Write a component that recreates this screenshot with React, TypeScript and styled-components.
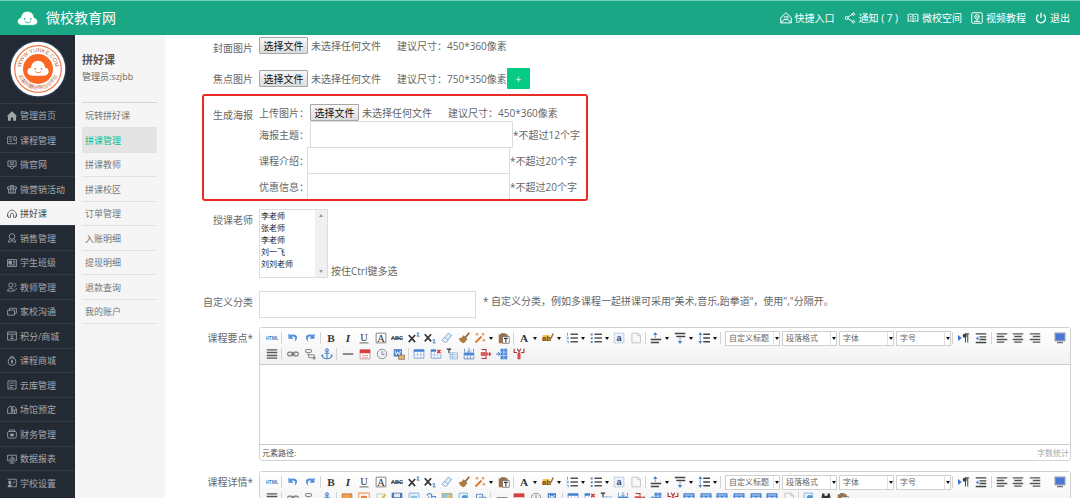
import React, { useRef } from "react";
import styled, { createGlobalStyle, css } from "styled-components";

const GlobalStyle = createGlobalStyle`
  * { box-sizing: border-box; }
  body { margin: 0; }
  body, button, input, select, textarea {
    font-family: "Open Sans", "Noto Sans CJK SC", sans-serif;
    font-size: 10px;
  }
`;

/* ---------- page frame ---------- */

const Page = styled.div`
  display: flex;
  flex-direction: column;
  height: 100vh;
  overflow: hidden;
  color: #666;
  background: #fff;
`;

const Header = styled.header`
  flex: none;
  display: flex;
  align-items: center;
  height: 35px;
  padding: 0 10px 0 17px;
  color: #fff;
  background: #1aa786;
  border-top: 1px solid #6fd0b8;
`;

const Brand = styled.h1`
  flex: 1;
  display: flex;
  align-items: center;
  gap: 8px;
  margin: 0;
  font-size: 14px;
  font-weight: 400;
  line-height: 20px;
`;

const HeaderNav = styled.nav`
  display: flex;
  gap: 9px;
`;

const HeaderLink = styled.a`
  display: flex;
  align-items: center;
  gap: 3px;
  color: #fff;
  line-height: 16px;
  text-decoration: none;
  white-space: nowrap;
`;

const Columns = styled.div`
  flex: 1;
  display: flex;
  min-height: 0;
`;

const Sidebar = styled.aside`
  flex: none;
  width: 75px;
  background: #242a33;
  overflow: hidden;
`;

const AvatarBox = styled.div`
  display: flex;
  justify-content: center;
  align-items: center;
  height: 68px;
`;

const rowRhythm = css`
  height: 24px;
  &:nth-child(even) { height: 25px; }
`;

const MenuList = styled.ul`
  margin: 0;
  padding: 0;
  list-style: none;
`;

const MenuItem = styled.li<{ $active?: boolean }>`
  ${rowRhythm}
  border-top: 1px solid ${p => (p.$active ? "#f5f5f5" : "#343a43")};
  background: ${p => (p.$active ? "#f5f5f5" : "transparent")};
  a {
    display: flex;
    align-items: center;
    gap: 3px;
    height: 100%;
    padding-left: 7px;
    color: ${p => (p.$active ? "#444" : "#a4a7ab")};
    font-size: 9px;
    text-decoration: none;
    white-space: nowrap;
  }
`;

const SubPanel = styled.aside`
  flex: none;
  width: 90px;
  padding: 16px 8px 0 7px;
  background: #f5f5f5;
  overflow: hidden;
`;

const SubTitle = styled.h2`
  margin: 0;
  color: #555;
  font-size: 11px;
  font-weight: 700;
  line-height: 18px;
`;

const SubUser = styled.p`
  margin: 0 0 17px;
  font-size: 9px;
  line-height: 16px;
`;

const SubList = styled(MenuList)`
  padding-top: 1px;
  border-top: 1px solid #d4d4d4;
`;

const SubItem = styled.li<{ $active?: boolean }>`
  ${rowRhythm}
  border-bottom: 1px solid #e2e2e2;
  background: ${p => (p.$active ? "#e4e4e4" : "transparent")};
  a {
    display: flex;
    align-items: center;
    height: 100%;
    padding-left: 3px;
    color: ${p => (p.$active ? "#12bd82" : "#777")};
    font-size: 9px;
    text-decoration: none;
  }
`;

const Main = styled.main`
  flex: 1;
  min-width: 0;
  padding: 2px 9px 0 0;
  overflow: hidden;
`;

/* ---------- form ---------- */

const FormRow = styled.div<{ $gap: number }>`
  position: relative;
  display: grid;
  grid-template-columns: 88px minmax(0, 1fr);
  column-gap: 6px;
  align-items: start;
  margin-bottom: ${p => p.$gap}px;
`;

const RowLabel = styled.label`
  line-height: 22px;
  text-align: right;
  white-space: nowrap;
`;

const Line = styled.div<{ $height: number }>`
  display: flex;
  align-items: center;
  height: ${p => p.$height}px;
  white-space: nowrap;
`;

const FileButton = styled.button`
  width: 49px;
  height: 17px;
  padding: 0;
  color: #111;
  line-height: 14px;
  background: linear-gradient(#f8f8f8, #dcdcdc);
  border: 1px solid #a6a6a6;
  border-radius: 1px;
`;

const FileName = styled.span`
  width: 89px;
  padding-left: 3px;
`;

const AddButton = styled.button`
  width: 23px;
  height: 21px;
  padding: 0;
  color: #fff;
  line-height: 18px;
  background: #05cb84;
  border: 0;
  border-radius: 1px;
`;

const Highlight = styled.div`
  position: absolute;
  inset: -10px auto -2px 37px;
  width: 386px;
  border: 2px solid #ea2a24;
  border-radius: 3px;
  pointer-events: none;
`;

const FieldName = styled.label<{ $wide?: boolean }>`
  flex: none;
  width: ${p => (p.$wide ? 51 : 48)}px;
`;

const TextInput = styled.input<{ $width: number }>`
  width: ${p => p.$width}px;
  height: 27px;
  margin-bottom: -1px;
  padding: 0 4px;
  background: #fff;
  border: 1px solid #dcdcdc;
  outline: none;
`;

const TeacherLine = styled.div`
  display: flex;
  align-items: flex-end;
  gap: 3px;
  line-height: 14px;
`;

const ListFrame = styled.div`
  position: relative;
  width: 69px;
  height: 69px;
  border: 1px solid #ddd;
`;

const TeacherList = styled.select`
  display: block;
  width: 100%;
  height: 100%;
  padding: 0;
  color: #222;
  background: #fff;
  border: 0;
  outline: none;
  scrollbar-width: none;
  option {
    min-height: 12px;
    height: 12px;
    padding: 0 1px;
    font-size: 8px;
    line-height: 12px;
  }
`;

const ListScroll = styled.div`
  position: absolute;
  inset: 0 0 0 auto;
  display: flex;
  flex-direction: column;
  justify-content: space-between;
  align-items: center;
  width: 12px;
  padding: 4px 0;
  background: #f0f0f0;
`;

const Hint = styled.span`
  align-self: flex-start;
  padding-left: 7px;
  line-height: 20px;
`;

/* ---------- rich text editor ---------- */

const EditorBox = styled.div`
  border: 1px solid #d2d2d2;
  border-radius: 3px;
`;

const Toolbar = styled.div`
  height: 37px;
  padding: 2px 0 0 1px;
  background: linear-gradient(#fff, #f1f1f1);
  border-bottom: 1px solid #ccc;
`;

const ToolRow = styled.div`
  display: flex;
  height: 16px;
`;

const ToolGroup = styled.div<{ $width: number; $last?: boolean }>`
  flex: none;
  display: flex;
  align-items: center;
  width: ${p => p.$width}px;
  padding: 0 2px;
  background: ${p => (p.$last ? "none" : "linear-gradient(#d4d4d4, #d4d4d4) right center / 1px 12px no-repeat")};
`;

const ToolButton = styled.button<{ $drop?: boolean }>`
  flex: ${p => (p.$drop ? 23 : 16)} 1 0;
  min-width: 0;
  display: flex;
  align-items: center;
  justify-content: center;
  gap: 3px;
  height: 16px;
  padding: 0;
  background: none;
  border: 0;
`;

const Combo = styled.label`
  flex: 1;
  display: flex;
  height: 15px;
  margin-left: 2px;
  background: #fff;
  border: 1px solid #d0d0d0;
  select {
    flex: 1;
    min-width: 0;
    padding: 0 0 0 3px;
    color: #666;
    font-size: 8px;
    line-height: 12px;
    background: none;
    border: 0;
    appearance: none;
    outline: none;
  }
`;

const ComboArrow = styled.span`
  display: flex;
  align-items: center;
  justify-content: center;
  width: 6px;
  border-left: 1px solid #e0e0e0;
`;

const Spring = styled.div`
  flex: 1;
`;

const EditArea = styled.textarea`
  display: block;
  width: 100%;
  height: 79px;
  padding: 6px;
  border: 0;
  outline: none;
  resize: none;
`;

const EditorFoot = styled.div`
  display: flex;
  justify-content: space-between;
  height: 16px;
  padding: 0 1px 0 2px;
  color: #555;
  font-size: 8px;
  line-height: 15px;
  border-top: 1px solid #ccc;
`;

const Counter = styled.span`
  color: #aaa;
`;

/* ---------- drawings ---------- */

const stroke = { fill: "none", stroke: "currentColor", strokeWidth: 1.3 } as const;

function Icon({ size = 12, children }: { size?: number; children: React.ReactNode }) {
  return (
    <svg width={size} height={size} viewBox="0 0 16 16" aria-hidden="true">
      {children}
    </svg>
  );
}

function Caret({ up, color = "#111" }: { up?: boolean; color?: string }) {
  return (
    <svg width="4" height="3" viewBox="0 0 4 3" aria-hidden="true">
      <path d={up ? "M0 3h4L2 0z" : "M0 0h4L2 3z"} fill={color} />
    </svg>
  );
}

const cloudPath =
  "M6 19C2.600 19 .5 17 .5 14.200c0-2.600 1.900-4.400 4.300-4.700C5 5 8.500 1.500 13 1.500s8 3.500 8.200 8c2.400.3 4.300 2.100 4.300 4.700 0 2.800-2.100 4.800-5.500 4.800z";

function CloudLogo() {
  return (
    <svg width="21" height="17" viewBox="0 0 26 21" aria-hidden="true">
      <path d={cloudPath} fill="#fff" stroke="#04bd74" strokeWidth="1" />
      <circle cx="9.500" cy="11" r="1" fill="#1aa786" />
      <circle cx="17" cy="11" r="1" fill="#1aa786" />
      <path d="M9.500 14c2 2.200 5.500 2.200 7.500 0" fill="none" stroke="#1aa786" />
    </svg>
  );
}

function Avatar() {
  return (
    <svg width="60" height="60" viewBox="0 0 60 60" role="img" aria-label="YUNKE">
      <circle cx="30" cy="30" r="28.500" fill="#34506a" opacity=".6" />
      <circle cx="30" cy="30" r="27.300" fill="#fff" />
      <circle cx="30" cy="30" r="23.300" fill="none" stroke="#ee8050" strokeWidth="1.300" />
      <circle cx="30" cy="30" r="15" fill="#fb6622" />
      <path id="ringTop" d="M12.800 33a17.400 17.400 0 1 1 34.400 0" fill="none" />
      <path id="ringBottom" d="M9.600 30a20.400 20.400 0 0 0 40.800 0" fill="none" />
      <text fontSize="5.500" fill="#b9684a" fontFamily="Liberation Sans, sans-serif" textAnchor="middle">
        <textPath href="#ringTop" startOffset="50%">WWW.YUNKE.COM</textPath>
      </text>
      <text fontSize="5" fill="#b9684a" fontFamily="Noto Sans CJK SC, sans-serif" textAnchor="middle">
        <textPath href="#ringBottom" startOffset="50%">云客网最好用O2O平台</textPath>
      </text>
      <g transform="translate(19 20.500) scale(.85)">
        <path d={cloudPath} fill="#fff" />
        <circle cx="9.500" cy="11" r="1" fill="#fb6622" />
        <circle cx="17" cy="11" r="1" fill="#fb6622" />
        <path d="M9.500 14c2 2.200 5.500 2.200 7.500 0" fill="none" stroke="#fb6622" />
      </g>
    </svg>
  );
}

const menuIcons: Record<string, React.ReactNode> = {
  home: <path d="M8 .5 0 8l1.500 1V15.500h4.700v-5h3.600v5h4.700V9L16 8z" fill="currentColor" />,
  course: <g {...stroke}><path d="M9 3H1v11h14v-4M3.500 6.500H8M3.500 10H8M11 8.500V3.500l2-1.500 2 1.500v5z" /></g>,
  site: <g {...stroke}><path d="M1.500 1.500h13V10h-13zM4.500 4.500h7M4.500 7h7M3.500 10 8 14.500l4.500-4.500" /></g>,
  gift: <g {...stroke}><path d="M1 4.500h14V8H1zM2.500 8v6.500h11V8M6 4.500v10M10 4.500v10M5 2.500h6" /></g>,
  pin: <g {...stroke}><path d="M4 13.500H2.500c-3-3-2-10 5.500-12 7.500 2 8.500 9 5.500 12H12M5.500 14V9c0-3 5-3 5 0v5M1 8.500c0 2 0 4 1.500 5M15 8.500c0 2 0 4-1.500 5" /></g>,
  sales: <g {...stroke}><circle cx="8" cy="5.500" r="4.500" /><path d="M5 9 2 14.500h3.500L8 11l2.500 3.500H14L11 9" /></g>,
  student: <g {...stroke}><path d="M.7 2.500h14.600v11H.7zM9.500 5.500h4M9.500 8h4M3 11h10.500" /><path d="M3 5h4v4H3z" fill="currentColor" /></g>,
  teacher: <g {...stroke}><circle cx="6" cy="5" r="3.300" /><path d="M1 14.500c0-6 10-6 10 0zM11 2c4 0 4 5 1 6M12 13.500c3-1 3-2 3-3.500" /></g>,
  chat: <g {...stroke}><path d="M4 5V2h11v8h-3M1 5h11v8H1z" /></g>,
  points: <g {...stroke}><path d="M1 1.500h14v13H1zM1 5h14M5.500 8h5M8 8v4M5.500 12h5" /></g>,
  shop: <g {...stroke}><circle cx="8" cy="9" r="6.200" /><path d="M5 3.500 6 1h4l1 2.500" /><path d="M8 6v6M6.500 9h3" strokeWidth="2" /></g>,
  library: <g {...stroke}><path d="M1.500 1.500h13v13h-13zM4 5l2 1 3-2 3 2M4 9h8M4 12h5" /></g>,
  venue: <g {...stroke}><path d="M1 13.500V6l3-4h3v11.500zM9 2.500h3l3 4v7H9zM9 8h6M12 8v5" /></g>,
  finance: <g {...stroke}><rect x="1" y="4" width="14" height="10.500" rx="2" /><path d="M4 4V1.500h8V4" /><path d="M6 8h4v3H6z" fill="currentColor" /></g>,
  report: <g {...stroke}><path d="M1 2h14v9H1zM4 14.500h8M8 11v3" /><path d="M5 9V7M8 9V4M11 9V6" strokeWidth="2" /></g>,
  school: <g {...stroke}><path d="M1 2h14v12H9" /><path d="M1.500 14c0-4 6-4 6 0zM3 5h3v4H3z" fill="currentColor" /><path d="m9 9 4-4" /></g>,
};

const headerIcons: Record<string, React.ReactNode> = {
  quick: <g {...stroke}><path d="M1 7.500 8 1l7 6.500V14.500H1zM1 14l5-4h4l5 4" /><path d="M5 6.500h6M5.500 9l2 1.500 4-4" /></g>,
  share: <g {...stroke}><path d="M5 7l6-4M5 8.500l6 4" /><circle cx="3.500" cy="8" r="2" /><circle cx="12.500" cy="2.800" r="1.600" /><circle cx="12.500" cy="13" r="1.600" /></g>,
  book: <g {...stroke}><path d="M8 4C6 2.500 3 2.500 1.500 3.500v9c2-1 4.500-1 6.500.5 2-1.500 4.500-1.500 6.500-.5v-9C13 2.500 10 2.500 8 4zM8 4v9M4 6h2M4 9h2M10 6h2M10 9h2" /></g>,
  video: <g {...stroke}><rect x="1" y="1" width="14" height="14" rx="1.500" /><circle cx="8" cy="6.500" r="3" /><path d="M4 12.500h8M6 6.500h4M8 9.500v3" /></g>,
  power: <g {...stroke} strokeWidth={1.700}><path d="M4.500 3.500a6 6 0 1 0 7 0M8 1v7" /></g>,
};

const glyph = { textAnchor: "middle", fontFamily: "Liberation Serif, serif", fill: "#333" } as const;
const lines = (d: string, color = "#555") => <path d={d} stroke={color} strokeWidth="1.800" fill="none" />;
const grid = (
  <>
    <path d="M1.500 2.500h13v11h-13z" fill="#fff" stroke="#5b8fd0" />
    <path d="M1 2h14v3H1z" fill="#3f7ed0" />
    <path d="M1.500 9h13M6 5v8.500M10.500 5v8.500" stroke="#9dbde6" />
  </>
);

const toolIcons: Record<string, React.ReactNode> = {
  html: <text x="8" y="10.500" textAnchor="middle" fontSize="6.500" fontWeight="700" fontFamily="Liberation Sans, sans-serif" fill="#4c82b8">HTML</text>,
  undo: <path d="M2 2v7h7L6.500 6.500c3-2 6 1 3.500 6.500 6-4 4-12-5.500-9z" fill="#4b93dd" />,
  redo: <path d="M14 2v7H7l2.500-2.500c-3-2-6 1-3.500 6.500-6-4-4-12 5.500-9z" fill="#4b93dd" />,
  bold: <text x="8" y="13" {...glyph} fontSize="15" fontWeight="700">B</text>,
  italic: <text x="8" y="13" {...glyph} fontSize="15" fontWeight="700" fontStyle="italic">I</text>,
  underline: <><text x="8" y="12" {...glyph} fontSize="14">U</text><path d="M2 14.500h12" stroke="#333" /></>,
  border: <><path d="M1.500 1.500h13v13h-13z" fill="none" stroke="#666" /><text x="8" y="13" {...glyph} fontSize="14">A</text></>,
  strike: <><text x="8" y="11" textAnchor="middle" fontSize="7.500" fontWeight="700" fontFamily="Liberation Sans, sans-serif" fill="#333">ABC</text><path d="M0 8.500h16" stroke="#333" /></>,
  sup: <><path d="m1 4 8.500 9.500M9.500 4 1 13.500" stroke="#333" strokeWidth="2.200" /><path d="M11.500 1.500h3L12 5.500h3.500" stroke="#3b78c9" strokeWidth="1.300" fill="none" /></>,
  sub: <><path d="m1 3 8.500 9.500M9.500 3 1 12.500" stroke="#333" strokeWidth="2.200" /><path d="M11.500 10.500h3L12 14.500h3.500" stroke="#3b78c9" strokeWidth="1.300" fill="none" /></>,
  eraser: <><path d="m1.500 11 8-9.500 5 3-8 9.500z" fill="#dce9fa" stroke="#6f9cd6" /><path d="m1.500 11 3-3.500 5 3-3 3.500z" fill="#fff" stroke="#6f9cd6" /></>,
  brush: <><path d="m15 1-5 6" stroke="#9a6a30" strokeWidth="2.500" /><path d="M1 8c3 1 5-2 6-3l5 5c-2 2-2 4-5 5-3-1-5-3-6-7z" fill="#b5793a" /><path d="m7 5 5 5" stroke="#777" strokeWidth="1.500" /></>,
  wand: <><path d="m2 14 8-8" stroke="#e0782c" strokeWidth="2.500" /><path d="M4 1v4M2 3h4M12 1v4M10 3h4M13 9v4M11 11h4" stroke="#f08c3c" strokeWidth="1.300" /></>,
  paste: <><path d="M1 3h12v12H1z" fill="#a86f38" /><path d="M4 1.500h6v3H4z" fill="#777" /><path d="M6 6h9v9H6z" fill="#fff" stroke="#666" /><path d="M8 8.500h5M10.500 8.500V14" stroke="#333" strokeWidth="1.400" /></>,
  color: <text x="8" y="13" {...glyph} fontSize="15" fontWeight="700">A</text>,
  back: <><path d="M1 4h9v8H1z" fill="#f1c64d" /><text x="6" y="11.500" textAnchor="middle" fontSize="10" fontWeight="700" fontFamily="Liberation Sans, sans-serif" fill="#543">ab</text><path d="m15 2-5 10" stroke="#9a6a30" strokeWidth="2" /></>,
  ol: <>{lines("M6 3h10M6 8h10M6 13h10")}<path d="M2 1v4M1 7h2v2H1M1 12h2v3" stroke="#4f85cc" fill="none" /></>,
  ul: <>{lines("M6 3h10M6 8h10M6 13h10")}<path d="M1 2h2.500v2.500H1zM1 7h2.500v2.500H1zM1 12h2.500v2.500H1z" fill="#4f85cc" /></>,
  anchorText: <><path d="M1.500 1.500h13v13h-13z" fill="#e9f1fc" stroke="#8fb0dc" strokeDasharray="2 1" /><text x="8" y="12" textAnchor="middle" fontSize="12" fontWeight="700" fontFamily="Liberation Sans, sans-serif" fill="#345">a</text></>,
  page: <path d="M2.500 1.500h8l3.500 3.500v9.500H2.500zM10.500 1.500V5H14" fill="#f7f7f7" stroke="#b5b5b5" />,
  before: <>{lines("M1 10h14M1 14h11", "#444")}<path d="M7 8V3" stroke="#4f85cc" /><path d="M4 4h6L7 0z" fill="#4f85cc" /></>,
  after: <>{lines("M1 2h14M3 6h12", "#444")}<path d="M8 8v4" stroke="#4f85cc" /><path d="M5 12h6l-3 4z" fill="#4f85cc" /></>,
  leading: <>{lines("M7 3h9M7 8h9M7 13h9", "#444")}<path d="M3 3v10" stroke="#4f85cc" /><path d="M.5 4h5L3 0zM.5 12h5L3 16z" fill="#4f85cc" /></>,
  ltr: <><path d="m0 4 5 4-5 4z" fill="#3f6fd8" /><path d="M10 2v12M13 2v12M15 2.500H9" stroke="#444" strokeWidth="1.300" fill="none" /><circle cx="9" cy="5" r="2.800" fill="#444" /></>,
  indent: <>{lines("M1 2.500h14M6 6.500h9M6 10h9M1 14h14", "#444")}<path d="M4.500 6v5L1 8.500z" fill="#3f6fd8" /></>,
  left: lines("M1 2.500h14M1 6h10M1 10h14M1 13.500h10"),
  center: lines("M1 2.500h14M3 6h10M1 10h14M3 13.500h10"),
  right: lines("M1 2.500h14M5 6h10M1 10h14M5 13.500h10"),
  justify: lines("M1 2.500h14M1 6h14M1 10h14M1 13.500h14"),
  screen: <><path d="M1.500 1.500h13v10h-13z" fill="#4a78d8" stroke="#8795b5" strokeWidth="1.500" /><path d="M4 14h8" stroke="#777" strokeWidth="2" /></>,
  link: <g fill="none" stroke="#777" strokeWidth="1.500"><rect x="1" y="5.500" width="6.500" height="5" rx="2" /><rect x="8.500" y="5.500" width="6.500" height="5" rx="2" /><path d="M5 8h6" /></g>,
  unlink: <g fill="none" stroke="#888" strokeWidth="1.500"><rect x="2" y="2" width="8" height="4" rx="2" /><rect x="6" y="9" width="8" height="4" rx="2" /><path d="m4 8 4 1M12 15l3-3M12 12l3 3" /></g>,
  anchor: <g fill="none" stroke="#4789cf" strokeWidth="1.500"><circle cx="8" cy="3" r="1.800" /><path d="M8 5v9.500M4.500 7h7M1 9c1 7 13 7 14 0M1 9l2 2M15 9l-2 2" /></g>,
  rule: <path d="M1 8h14" stroke="#444" strokeWidth="1.600" />,
  date: <><path d="M1.500 2.500h13v12h-13z" fill="#fff" stroke="#b88" /><path d="M1 2h14v5H1z" fill="#da3e3e" /><path d="M4 10h8M4 12.500h8" stroke="#d88" /></>,
  time: <><circle cx="8" cy="8" r="6.300" fill="#eef1f4" stroke="#8a8f96" strokeWidth="1.300" /><path d="M8 4v4.500h3.500" fill="none" stroke="#567" /></>,
  word: <><path d="M1 1.500h11v10H1z" fill="#4c86d2" /><path d="m3 4 1.500 5L6.500 5l2 4L10 4" stroke="#fff" fill="none" strokeWidth="1.200" /><path d="M7.500 9.500h8v5.500h-8z" fill="#e9b272" stroke="#7a6a55" /></>,
  table: grid,
  tableDel: <>{grid}<path d="M8 1h7.500v7.500H8z" fill="#fff" /><path d="m9.500 2.500 4.500 4.500M14 2.500 9.500 7" stroke="#d83a3a" strokeWidth="2" /></>,
  title: <><path d="M1 1.500h6M4 1.500V7" stroke="#333" strokeWidth="1.500" /><path d="M5.500 6.500h10v8h-10zM5.500 9h10M5.500 12h10M9 6v8" fill="#fff" stroke="#7fa8dc" /></>,
  rowIn: <><path d="M1 6h14v4H1z" fill="#4b88d8" /><path d="M1.500 11v3.500h13V11M6 11v3M10 11v3M8 0v5M5.500 3.500 8 6l2.500-2.500M2 1v4M14 1v4" fill="none" stroke="#4577b8" /></>,
  rowOut: <><path d="M1 5.500h9v5H1z" fill="#e05656" /><path d="M2 2h6v3M2 14h6v-3M9 8h6M13 5.500v5" fill="none" stroke="#a33" strokeWidth="1.500" /></>,
  colIn: <><path d="M6 1h9v14H6z" fill="#4b88d8" /><path d="M6 5.500h9M6 10h9M10.500 1v14" stroke="#c5dbf5" /><path d="M0 8h5M3 5.500 5 8 3 10.500" fill="none" stroke="#4577b8" strokeWidth="1.300" /></>,
  colOut: <><path d="M6 7h4v8H6z" fill="#d64a4a" /><path d="M1.500 1v5h4M14.500 1v5h-4M5.500 1 8 5l2.500-4M8 5v3" fill="none" stroke="#a33" strokeWidth="1.500" /></>,
  image: <><path d="M1.500 2.500h13v11h-13z" fill="#f5a04c" stroke="#a46b35" /><path d="m2 13 4-5 3 3 3-4 2 6z" fill="#5a9a50" /></>,
  face: <><path d="M1 1.500h14v13H1z" fill="#fff" stroke="#f0995c" strokeWidth="1.500" /><path d="M4 5h8v7H4z" fill="#e98345" /></>,
  draw: <><path d="M2.500 2.500h10v12h-10z" fill="#f4f7ea" stroke="#b9c6a0" /><path d="m14 3-6 8" stroke="#d7b944" strokeWidth="2.500" /></>,
  save: <><path d="M1.500 1.500h13v13h-13z" fill="#4f77b8" stroke="#44639a" /><path d="M4 2h8v5H4z" fill="#dfe8f4" /></>,
  map: <><path d="M1.500 1.500h13v13h-13z" fill="#e8f2fd" stroke="#5f9cdc" /><path d="M4 5h8v6H4z" fill="#8dbbea" /></>,
  clip: <path d="M3 5c0-4 6-4 6 0v6c0 3-4 3-4 0V6M8 6h6v8H8" fill="none" stroke="#5a88d8" strokeWidth="1.500" />,
  photo: <><path d="M1.500 2h13v12h-13z" fill="#8ec3ea" stroke="#c49a4a" /><circle cx="10" cy="6" r="2.500" fill="#f1c64d" /></>,
  globe: <><path d="M1.500 1.500h11v13h-11z" fill="#eef5fc" stroke="#6a9ed8" /><circle cx="9" cy="8" r="4" fill="#4c9bd0" /></>,
  code: <path d="M2 3h8v4H5M7 7h7v6H8M2 3v5" fill="none" stroke="#6f8fd0" strokeWidth="1.600" />,
  cells: <><path d="M1.500 2.500h13v11h-13z" fill="#cfe2fa" stroke="#3f7ed0" strokeWidth="1.600" /><path d="M1 5.500h14M8 5v9" stroke="#3f7ed0" strokeWidth="1.500" /></>,
  find: <path d="M3 2h3v3h4V2h3l2 12H9.500V9h-3v5H1z" fill="#333" />,
};

/* ---------- data ---------- */

const headerLinks = [
  ["quick", "快捷入口"],
  ["share", "通知 ( 7 )"],
  ["book", "微校空间"],
  ["video", "视频教程"],
  ["power", "退出"],
];

const menu = [
  ["home", "管理首页"], ["course", "课程管理"], ["site", "微官网"], ["gift", "微营销活动"],
  ["pin", "拼好课"], ["sales", "销售管理"], ["student", "学生班级"], ["teacher", "教师管理"],
  ["chat", "家校沟通"], ["points", "积分/商城"], ["shop", "课程商城"], ["library", "云库管理"],
  ["venue", "场馆预定"], ["finance", "财务管理"], ["report", "数据报表"], ["school", "学校设置"],
];

const subMenu = [
  "玩转拼好课", "拼课管理", "拼课教师", "拼课校区", "订单管理", "入账明细", "提现明细", "退款查询", "我的账户",
];

const teachers = ["李老师", "张老师", "李老师", "刘一飞", "刘刘老师"];

type Group = { width: number; tools: string[]; last?: boolean };

const dropTools = new Set(["wand", "color", "back", "ol", "ul", "before", "after", "leading"]);

const mainTools: Group[] = [
  { width: 21, tools: ["html"] },
  { width: 39, tools: ["undo", "redo"] },
  { width: 193, tools: ["bold", "italic", "underline", "border", "strike", "sup", "sub", "eraser", "brush", "wand", "paste"] },
  { width: 132, tools: ["color", "back", "ol", "ul", "anchorText", "page"] },
  { width: 75, tools: ["before", "after", "leading"] },
];

const sideTools: Group[] = [
  { width: 39, tools: ["ltr", "indent"] },
  { width: 53, tools: ["left", "center", "right"], last: true },
];

const shortRow: Group[] = [
  { width: 21, tools: ["justify"] },
  { width: 55, tools: ["link", "unlink", "anchor"] },
  { width: 72, tools: ["rule", "date", "time", "word"] },
  { width: 120, tools: ["table", "tableDel", "title", "rowIn", "rowOut", "colIn", "colOut"], last: true },
];

const longRow: Group[] = [
  { width: 21, tools: ["justify"] },
  { width: 55, tools: ["link", "unlink", "anchor"] },
  { width: 154, tools: ["image", "face", "draw", "save", "map", "clip", "photo", "globe", "code"] },
  { width: 72, tools: ["rule", "date", "time", "word"] },
  { width: 236, tools: ["table", "tableDel", "title", "rowIn", "rowOut", "colIn", "colOut", "cells", "cells", "cells", "cells", "cells", "cells", "page"] },
  { width: 54, tools: ["globe", "find", "paste"], last: true },
];

/* ---------- parts ---------- */

function FilePicker({ id }: { id: string }) {
  const input = useRef<HTMLInputElement>(null);
  return (
    <>
      <input ref={input} id={id} type="file" hidden />
      <FileButton type="button" onClick={() => input.current?.click()}>选择文件</FileButton>
      <FileName>未选择任何文件</FileName>
    </>
  );
}

function Tools({ groups }: { groups: Group[] }) {
  return (
    <>
      {groups.map((g, i) => (
        <ToolGroup key={i} $width={g.width} $last={g.last}>
          {g.tools.map((name, j) => (
            <ToolButton key={j} type="button" aria-label={name} $drop={dropTools.has(name)}>
              <Icon>{toolIcons[name]}</Icon>
              {dropTools.has(name) && <Caret />}
            </ToolButton>
          ))}
        </ToolGroup>
      ))}
    </>
  );
}

function Editor({ id, second, status }: { id: string; second: Group[]; status?: boolean }) {
  return (
    <EditorBox>
      <Toolbar>
        <ToolRow>
          <Tools groups={mainTools} />
          <ToolGroup $width={232}>
            {["自定义标题", "段落格式", "字体", "字号"].map(name => (
              <Combo key={name}>
                <select aria-label={name}><option>{name}</option></select>
                <ComboArrow><Caret /></ComboArrow>
              </Combo>
            ))}
          </ToolGroup>
          <Tools groups={sideTools} />
          <Spring />
          <Tools groups={[{ width: 20, tools: ["screen"], last: true }]} />
        </ToolRow>
        <ToolRow><Tools groups={second} /></ToolRow>
      </Toolbar>
      <EditArea id={id} />
      {status && (
        <EditorFoot>
          <span>元素路径:</span>
          <Counter>字数统计</Counter>
        </EditorFoot>
      )}
    </EditorBox>
  );
}

export default function App() {
  return (
    <Page>
      <GlobalStyle />
      <Header>
        <Brand><CloudLogo />微校教育网</Brand>
        <HeaderNav>
          {headerLinks.map(([icon, text]) => (
            <HeaderLink key={icon} href="#"><Icon>{headerIcons[icon]}</Icon>{text}</HeaderLink>
          ))}
        </HeaderNav>
      </Header>
      <Columns>
        <Sidebar>
          <AvatarBox><Avatar /></AvatarBox>
          <MenuList>
            {menu.map(([icon, text]) => (
              <MenuItem key={icon} $active={icon === "pin"}>
                <a href="#"><Icon size={10}>{menuIcons[icon]}</Icon>{text}</a>
              </MenuItem>
            ))}
          </MenuList>
        </Sidebar>
        <SubPanel>
          <SubTitle>拼好课</SubTitle>
          <SubUser>管理员:szjbb</SubUser>
          <SubList>
            {subMenu.map(text => (
              <SubItem key={text} $active={text === "拼课管理"}><a href="#">{text}</a></SubItem>
            ))}
          </SubList>
        </SubPanel>
        <Main>
          <FormRow $gap={9}>
            <RowLabel htmlFor="cover">封面图片</RowLabel>
            <Line $height={17}><FilePicker id="cover" />建议尺寸：450*360像素</Line>
          </FormRow>
          <FormRow $gap={14}>
            <RowLabel htmlFor="focus">焦点图片</RowLabel>
            <Line $height={21}>
              <FilePicker id="focus" />建议尺寸：750*350像素
              <AddButton type="button">+</AddButton>
            </Line>
          </FormRow>
          <FormRow $gap={10}>
            <RowLabel as="span">生成海报</RowLabel>
            <div>
              <Line $height={17}>
                <FieldName $wide htmlFor="poster">上传图片：</FieldName>
                <FilePicker id="poster" />建议尺寸：450*360像素
              </Line>
              <Line $height={26}>
                <FieldName $wide htmlFor="theme">海报主题：</FieldName>
                <TextInput id="theme" $width={203} />*不超过12个字
              </Line>
              <Line $height={26}>
                <FieldName htmlFor="intro">课程介绍：</FieldName>
                <TextInput id="intro" $width={203} />*不超过20个字
              </Line>
              <Line $height={26}>
                <FieldName htmlFor="promo">优惠信息：</FieldName>
                <TextInput id="promo" $width={203} />*不超过20个字
              </Line>
            </div>
            <Highlight />
          </FormRow>
          <FormRow $gap={13}>
            <RowLabel htmlFor="teacher">授课老师</RowLabel>
            <TeacherLine>
              <ListFrame>
                <TeacherList id="teacher" multiple>
                  {teachers.map((name, i) => <option key={i}>{name}</option>)}
                </TeacherList>
                <ListScroll><Caret up color="#999" /><Caret color="#999" /></ListScroll>
              </ListFrame>
              按住Ctrl键多选
            </TeacherLine>
          </FormRow>
          <FormRow $gap={10}>
            <RowLabel htmlFor="category">自定义分类</RowLabel>
            <Line $height={26}>
              <TextInput id="category" $width={217} />
              <Hint>* 自定义分类，例如多课程一起拼课可采用“美术,音乐,跆拳道“，使用","分隔开。</Hint>
            </Line>
          </FormRow>
          <FormRow $gap={10}>
            <RowLabel htmlFor="points">课程要点*</RowLabel>
            <Editor id="points" second={shortRow} status />
          </FormRow>
          <FormRow $gap={10}>
            <RowLabel htmlFor="details">课程详情*</RowLabel>
            <Editor id="details" second={longRow} />
          </FormRow>
        </Main>
      </Columns>
    </Page>
  );
}
